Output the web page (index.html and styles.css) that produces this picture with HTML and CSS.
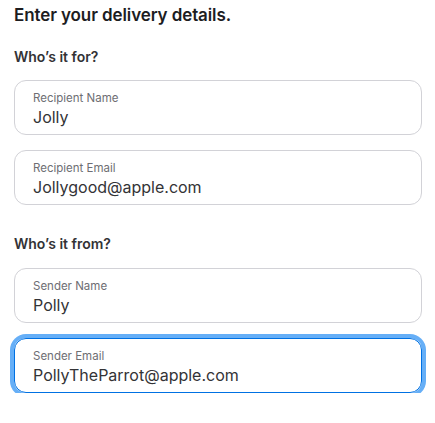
FILE: index.html
```html
<!DOCTYPE html>
<html lang="en">
<head>
<meta charset="utf-8">
<link rel="stylesheet" href="styles.css">
</head>
<body>
<div class="page">
  <h1 class="title">Enter your delivery details.</h1>
  <h2 class="section">Who’s it for?</h2>
  <div class="fields">
    <div class="field">
      <div class="label">Recipient Name</div>
      <div class="value">Jolly</div>
    </div>
    <div class="field">
      <div class="label">Recipient Email</div>
      <div class="value">Jollygood@apple.com</div>
    </div>
  </div>
  <h2 class="section section-from">Who’s it from?</h2>
  <div class="fields">
    <div class="field">
      <div class="label">Sender Name</div>
      <div class="value">Polly</div>
    </div>
    <div class="field focused">
      <div class="label">Sender Email</div>
      <div class="value">PollyTheParrot@apple.com</div>
    </div>
  </div>
</div>
</body>
</html>
```
FILE: styles.css
```css
html, body {
  margin: 0;
  padding: 0;
  background: #ffffff;
}
body {
  font-family: Inter, "Noto Sans", "Liberation Sans", sans-serif;
  color: #1d1d1f;
}
.page {
  padding: 4px 13px 0 14px;
}
.title {
  margin: 0;
  font-size: 17px;
  line-height: 22px;
  font-weight: 600;
  letter-spacing: -0.1px;
  color: #1d1d1f;
}
.section {
  margin: 22px 0 14px;
  font-size: 14px;
  line-height: 18px;
  font-weight: 600;
  color: #333336;
}
.section-from {
  margin-top: 30px;
  margin-bottom: 15px;
}
.fields {
  display: flex;
  flex-direction: column;
  gap: 15px;
}
.field {
  height: 55px;
  box-sizing: border-box;
  border: 1px solid #d2d2d7;
  border-radius: 12px;
  padding: 10px 18px 0 18px;
}
.label {
  font-size: 11.5px;
  line-height: 14px;
  color: #6e6e73;
}
.value {
  margin-top: 1px;
  font-size: 16px;
  line-height: 22px;
  color: #333336;
}
.focused {
  border-color: #0071e3;
  box-shadow: 0 0 0 4px #66aff7;
}
```
